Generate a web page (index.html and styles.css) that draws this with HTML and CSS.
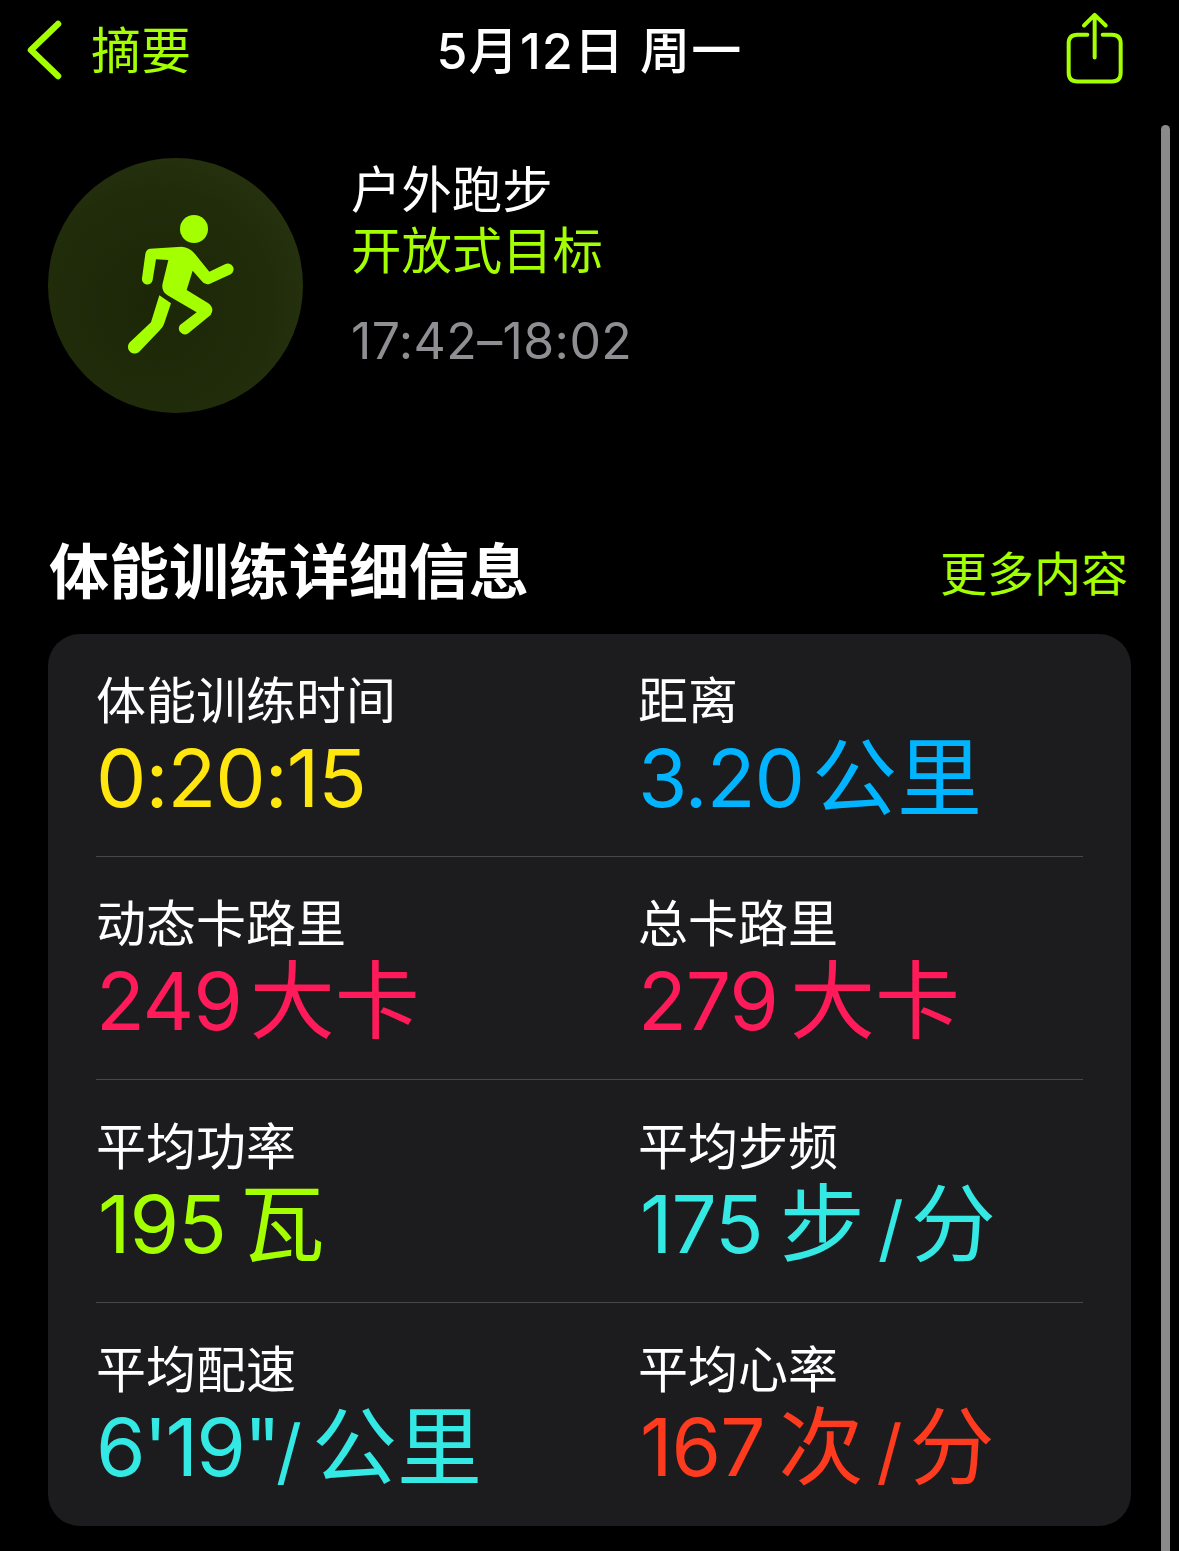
FILE: index.html
```html
<!DOCTYPE html>
<html lang="zh-CN">

<head>
    <meta charset="UTF-8">
    <meta name="viewport" content="width=device-width, initial-scale=1.0">
    <title>体能训练详细信息</title>
    <link rel="stylesheet" href="styles.css">
</head>

<body>
    <header class="nav">
        <a class="nav-back" href="#">
            <svg class="back-icon" viewBox="0 0 40 62" width="40" height="62">
                <path d="M33 5 L6 31 L33 57" />
            </svg>
            <span>摘要</span>
        </a>
        <h1 class="nav-title">5月12日 周一</h1>
        <a class="nav-share" href="#">
            <svg class="share-icon" viewBox="70 30 180 230" width="60" height="77">
                <path d="M140 104 H110 Q84 104 84 130 V218 Q84 244 110 244 H214 Q240 244 240 218 V130 Q240 104 214 104 H186" />
                <path d="M162 172 V45 M130 76 L162 44 L195 76" />
            </svg>
        </a>
    </header>

    <section class="workout">
        <div class="workout-badge">
            <svg class="runner" viewBox="24 24 765 765" width="255" height="255">
                <circle cx="462" cy="237" r="42" />
                <path d="M330 296 L425 290 Q450 292 465 312 L508 365 L555 343 A17 17 0 0 1 572 373 L510 401 Q495 407 485 393 L458 362 L440 420 L505 460 Q525 475 512 495 L445 550 A18 18 0 0 1 420 525 L470 487 L385 437 Q362 425 368 400 L385 330 L348 328 L338 390 A16 16 0 0 1 306 385 L316 312 Q318 298 330 296 Z" />
                <path d="M358 436 L393 460 L372 522 Q368 533 360 540 L300 603 A20 20 0 0 1 268 578 L333 517 Z" />
            </svg>
        </div>
        <div class="workout-text">
            <div class="workout-name">户外跑步</div>
            <div class="workout-goal">开放式目标</div>
            <div class="workout-time">17:42–18:02</div>
        </div>
    </section>

    <div class="section-head">
        <h2>体能训练详细信息</h2>
        <a href="#">更多内容</a>
    </div>

    <section class="card">
        <div class="row">
            <div class="stat">
                <div class="stat-label">体能训练时间</div>
                <div class="stat-value yellow">0:20:15</div>
            </div>
            <div class="stat">
                <div class="stat-label">距离</div>
                <div class="stat-value blue">3.20<span class="unit">公里</span></div>
            </div>
        </div>
        <div class="row">
            <div class="stat">
                <div class="stat-label">动态卡路里</div>
                <div class="stat-value pink">249<span class="unit">大卡</span></div>
            </div>
            <div class="stat">
                <div class="stat-label">总卡路里</div>
                <div class="stat-value pink">279<span class="unit unit-mid">大卡</span></div>
            </div>
        </div>
        <div class="row">
            <div class="stat">
                <div class="stat-label">平均功率</div>
                <div class="stat-value lime lead-one">195<span class="unit unit-loose">瓦</span></div>
            </div>
            <div class="stat">
                <div class="stat-label">平均步频</div>
                <div class="stat-value cyan lead-one">175<span class="unit unit-wide">步</span><span class="slash">/</span><span class="unit">分</span></div>
            </div>
        </div>
        <div class="row">
            <div class="stat">
                <div class="stat-label">平均配速</div>
                <div class="stat-value cyan pace">6'19"<span class="slash slash-tight">/</span><span class="unit unit-mid">公里</span></div>
            </div>
            <div class="stat">
                <div class="stat-label">平均心率</div>
                <div class="stat-value red lead-one">167<span class="unit unit-loose">次</span><span class="slash">/</span><span class="unit">分</span></div>
            </div>
        </div>
    </section>

    <div class="scrollbar"></div>
</body>

</html>
```

FILE: styles.css
```css
html,
body {
    height: 100%;
}

body {
    margin: 0;
    padding: 0;
    background-color: #000;
    color: #fff;
    font-family: Inter, 'Noto Sans CJK SC', sans-serif;
    overflow: hidden;
    position: relative;
}

a {
    color: #a4ff00;
    text-decoration: none;
}

.nav {
    display: grid;
    grid-template-columns: 1fr auto 1fr;
    align-items: center;
    height: 100px;
    padding: 0 25px;
}

.nav-back {
    display: flex;
    align-items: center;
    gap: 26px;
    font-size: 50px;
}

.nav-back span {
    padding-bottom: 6px;
}

.back-icon path {
    fill: none;
    stroke: #a4ff00;
    stroke-width: 6.5;
    stroke-linecap: round;
    stroke-linejoin: round;
}

.nav-title {
    margin: 0 0 6px;
    font-size: 50px;
    font-weight: 500;
    letter-spacing: 1.3px;
}

.nav-share {
    justify-self: end;
    display: flex;
    margin: 0 30px 4px 0;
}

.share-icon path {
    fill: none;
    stroke: #a4ff00;
    stroke-width: 12;
    stroke-linecap: round;
    stroke-linejoin: round;
}

.workout {
    display: flex;
    gap: 48px;
    padding: 58px 48px 0;
}

.workout-badge {
    width: 255px;
    height: 255px;
    border-radius: 50%;
    background: radial-gradient(circle at 42% 58%, #1c2707 0%, #212c0b 55%, #2b3711 100%);
}

.runner {
    display: block;
    fill: #a4ff00;
}

.workout-text {
    padding-top: 1px;
    font-size: 50px;
    line-height: 61px;
}

.workout-name,
.workout-goal {
    font-size: 50.4px;
}

.workout-goal {
    color: #a4ff00;
}

.workout-time {
    margin-top: 30px;
    color: #8e8e93;
    letter-spacing: 0.4px;
}

.section-head {
    display: flex;
    justify-content: space-between;
    align-items: center;
    padding: 114px 51px 0 49px;
    height: 80px;
}

.section-head h2 {
    margin: 0;
    font-size: 60px;
    font-weight: 700;
}

.section-head a {
    font-size: 47px;
    margin-top: 6px;
}

.card {
    margin: 27px 48px 0;
    padding: 0 48px;
    height: 892px;
    box-sizing: border-box;
    background-color: #1c1c1e;
    border-radius: 32px;
}

.row {
    display: grid;
    grid-template-columns: 542px 1fr;
    height: 223px;
    box-sizing: border-box;
    padding-top: 37px;
    border-bottom: 1px solid #47474a;
}

.row:last-child {
    border-bottom: none;
}

.stat-label {
    font-size: 50px;
    line-height: 61px;
}

.stat-value {
    font-size: 80px;
    line-height: 92px;
    height: 92px;
    letter-spacing: -1px;
    white-space: nowrap;
}

.lead-one {
    padding-left: 2px;
}

.unit {
    margin-left: 8px;
    font-size: 85px;
    line-height: 1;
    letter-spacing: 0;
    vertical-align: -2px;
}

.unit-mid {
    margin-left: 12px;
}

.unit-loose {
    margin-left: 14px;
}

.unit-wide {
    margin-left: 17px;
}

.slash {
    margin-left: 13px;
    font-size: 72px;
    line-height: 1;
    vertical-align: -1px;
}

.pace {
    letter-spacing: -2px;
}

.slash-tight {
    margin-left: -3px;
}

.yellow {
    color: #ffe60f;
}

.blue {
    color: #00b4ff;
}

.pink {
    color: #ff1a5a;
}

.lime {
    color: #a4ff00;
}

.cyan {
    color: #34e8e4;
}

.red {
    color: #ff3b1f;
}

.scrollbar {
    position: absolute;
    top: 125px;
    bottom: 0;
    left: 1161px;
    width: 9px;
    background-color: #8a8a8a;
    border-radius: 5px 5px 0 0;
}
```
